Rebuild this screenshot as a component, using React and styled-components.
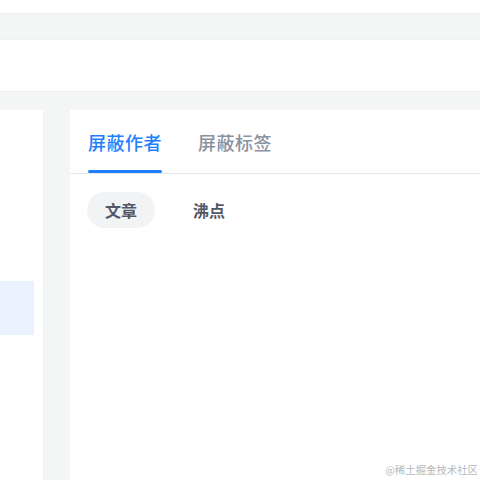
import styled, { createGlobalStyle, css } from 'styled-components';
import { useState } from 'react';

const GlobalStyle = createGlobalStyle`
  html, body {
    margin: 0;
    padding: 0;
    background: #f4f5f5;
    font-family: 'Noto Sans CJK SC', 'Noto Sans', sans-serif;
  }
  #root {
    min-height: 100vh;
  }
`;

const tabs = ['屏蔽作者', '屏蔽标签'];
const filters = ['文章', '沸点'];

export default function App() {
  const [activeTab, setActiveTab] = useState(0);
  const [activeFilter, setActiveFilter] = useState(0);

  return (
    <Page>
      <GlobalStyle />
      <TopGap />
      <Band />
      <Header />
      <Body>
        <Sidebar>
          <SideItem active />
        </Sidebar>
        <Panel>
          <TabBar>
            {tabs.map((label, i) => (
              <Tab key={label} active={activeTab === i} onClick={() => setActiveTab(i)}>
                {label}
              </Tab>
            ))}
          </TabBar>
          <FilterRow>
            {filters.map((label, i) => (
              <Pill key={label} active={activeFilter === i} onClick={() => setActiveFilter(i)}>
                {label}
              </Pill>
            ))}
          </FilterRow>
        </Panel>
      </Body>
      <Watermark>@稀土掘金技术社区</Watermark>
    </Page>
  );
}

const Page = styled.div`
  position: relative;
  display: flex;
  flex-direction: column;
  height: 100vh;
  overflow: hidden;
`;

const TopGap = styled.div`
  height: 13px;
  background: #fff;
`;

const Band = styled.div`
  height: 25px;
  background: #f4f5f5;
  border-top: 1px solid #eceeef;
  border-bottom: 1px solid #f0f1f2;
`;

const Header = styled.div`
  height: 51px;
  background: #fff;
  border-bottom: 1px solid #ebedee;
`;

const Body = styled.div`
  flex: 1;
  display: flex;
  gap: 27px;
  padding-top: 18px;
`;

const Sidebar = styled.div`
  width: 43px;
  background: #fff;
  padding-top: 171px;
  box-sizing: border-box;
`;

const SideItem = styled.div`
  width: 34px;
  height: 54px;
  ${({ active }) =>
    active &&
    css`
      background: #eaf2ff;
    `}
`;

const Panel = styled.div`
  flex: 1;
  background: #fff;
`;

const TabBar = styled.div`
  height: 63px;
  display: flex;
  gap: 36px;
  padding: 0 18px;
  border-bottom: 1px solid #e4e6eb;
`;

const Tab = styled.div`
  position: relative;
  display: flex;
  align-items: center;
  font-size: 18px;
  line-height: 24px;
  letter-spacing: 0.5px;
  font-weight: 500;
  color: #8a919f;
  cursor: pointer;
  ${({ active }) =>
    active &&
    css`
      color: #1e80ff;
      &::after {
        content: '';
        position: absolute;
        left: 0;
        right: 0;
        bottom: 0;
        height: 3px;
        border-radius: 2px;
        background: #1e80ff;
      }
    `}
`;

const FilterRow = styled.div`
  display: flex;
  gap: 20px;
  padding: 18px 17px;
`;

const Pill = styled.div`
  height: 36px;
  padding: 0 18px;
  border-radius: 18px;
  display: flex;
  align-items: center;
  font-size: 16px;
  font-weight: 600;
  color: #515767;
  cursor: pointer;
  ${({ active }) =>
    active &&
    css`
      background: #f2f3f5;
    `}
`;

const Watermark = styled.div`
  position: absolute;
  right: 2px;
  bottom: 3px;
  font-family: 'Noto Sans CJK SC', sans-serif;
  font-size: 10.4px;
  line-height: 14px;
  color: #b4b8bf;
`;
